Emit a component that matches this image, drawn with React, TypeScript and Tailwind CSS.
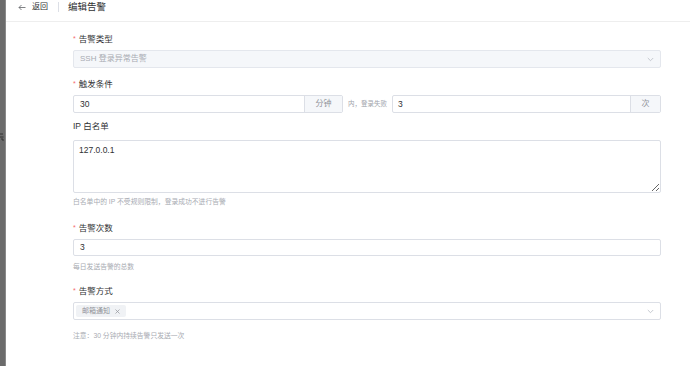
import React from "react";

const font = { fontFamily: '"Liberation Sans", "Noto Sans CJK SC", sans-serif' };

function Label({ text, required }: { text: string; required?: boolean }) {
  return (
    <div className="flex items-center h-[12px] text-[8.5px] leading-[12px] text-[#303133]">
      {required && <span className="text-[#f56c6c] mr-[3px] text-[7px]">*</span>}
      <span>{text}</span>
    </div>
  );
}

function Chevron() {
  return (
    <svg width="7" height="5" viewBox="0 0 7 5" className="shrink-0">
      <path d="M0.8 1 L3.5 3.7 L6.2 1" fill="none" stroke="#b8bcc4" strokeWidth="0.8" />
    </svg>
  );
}

export default function App() {
  return (
    <div className="w-[690px] h-[366px] flex bg-white overflow-hidden" style={font}>
      <div className="w-[5px] h-full bg-[#6b6b6b] relative overflow-hidden">
        <svg width="5" height="8" viewBox="0 0 5 8" className="absolute left-0 top-[133px]">
          <path d="M0 1 H3 M0 4 H3.5 M1 6 H3 V8" fill="none" stroke="#2d2d2d" strokeWidth="0.9" />
        </svg>
      </div>
      <div className="w-[1px] h-full bg-[#8a8a8a]" />
      <div className="flex-1 flex flex-col">
        <div className="h-[22px] border-b border-[#eeeeee] shrink-0">
          <div className="h-[14px] flex items-center">
            <svg width="8" height="7" viewBox="0 0 8 7" className="ml-[12px]">
              <path d="M7.5 3.5 H1 M3.5 1 L1 3.5 L3.5 6" fill="none" stroke="#606266" strokeWidth="0.8" />
            </svg>
            <span className="ml-[6px] text-[8px] text-[#303133]">返回</span>
            <div className="ml-[10px] w-[1px] h-[10px] bg-[#dcdfe6]" />
            <span className="ml-[9px] text-[9.5px] text-[#303133]">编辑告警</span>
          </div>
        </div>
        <div className="ml-[67px] mr-[29px] flex flex-col">
          <div className="mt-[11px]"><Label text="告警类型" required /></div>
          <div className="mt-[5px] h-[18px] rounded-[2px] border border-[#e4e7ed] bg-[#f5f7fa] flex items-center px-[6px] justify-between">
            <span className="text-[8px] text-[#a8abb2]">SSH 登录异常告警</span>
            <Chevron />
          </div>

          <div className="mt-[10px]"><Label text="触发条件" required /></div>
          <div className="mt-[5px] h-[18px] flex items-center">
            <div className="flex-1 h-full flex rounded-[2px] border border-[#dcdfe6]">
              <div className="flex-1 flex items-center px-[6px] text-[8.5px] text-[#303133]">30</div>
              <div className="w-[38px] border-l border-[#dcdfe6] bg-[#f5f7fa] flex items-center justify-center text-[8px] text-[#909399]">分钟</div>
            </div>
            <span className="mx-[5px] text-[6.5px] text-[#a0a3aa]">内，登录失败</span>
            <div className="w-[269px] h-full flex rounded-[2px] border border-[#dcdfe6]">
              <div className="flex-1 flex items-center px-[5px] text-[8.5px] text-[#303133]">3</div>
              <div className="w-[30px] border-l border-[#dcdfe6] bg-[#f5f7fa] flex items-center justify-center text-[8px] text-[#909399]">次</div>
            </div>
          </div>

          <div className="mt-[7px]"><Label text="IP 白名单" /></div>
          <textarea
            readOnly
            defaultValue="127.0.0.1"
            className="mt-[8px] h-[53px] rounded-[2px] border border-[#dcdfe6] px-[5px] py-[3px] text-[8.5px] leading-[12px] text-[#303133] resize-y outline-none"
            style={font}
          />
          <div className="mt-[4px] h-[10px] text-[6.8px] leading-[10px] text-[#a8abb2]">白名单中的 IP 不受规则限制，登录成功不进行告警</div>

          <div className="mt-[15px]"><Label text="告警次数" required /></div>
          <div className="mt-[5px] h-[17px] rounded-[2px] border border-[#dcdfe6] flex items-center px-[6px] text-[8.5px] text-[#303133]">3</div>
          <div className="mt-[6px] h-[10px] text-[6.8px] leading-[10px] text-[#a8abb2]">每日发送告警的总数</div>

          <div className="mt-[13px]"><Label text="告警方式" required /></div>
          <div className="mt-[5px] h-[18px] rounded-[2px] border border-[#dcdfe6] flex items-center pl-[2px] pr-[6px] justify-between">
            <div className="h-[12px] rounded-[2px] bg-[#f0f2f5] flex items-center px-[6px] gap-[5px]">
              <span className="text-[7px] text-[#909399]">邮箱通知</span>
              <svg width="5" height="5" viewBox="0 0 5 5">
                <path d="M0.5 0.5 L4.5 4.5 M4.5 0.5 L0.5 4.5" stroke="#909399" strokeWidth="0.7" />
              </svg>
            </div>
            <Chevron />
          </div>
          <div className="mt-[11px] h-[10px] text-[6.8px] leading-[10px] text-[#a8abb2]">注意：30 分钟内持续告警只发送一次</div>
        </div>
      </div>
    </div>
  );
}
